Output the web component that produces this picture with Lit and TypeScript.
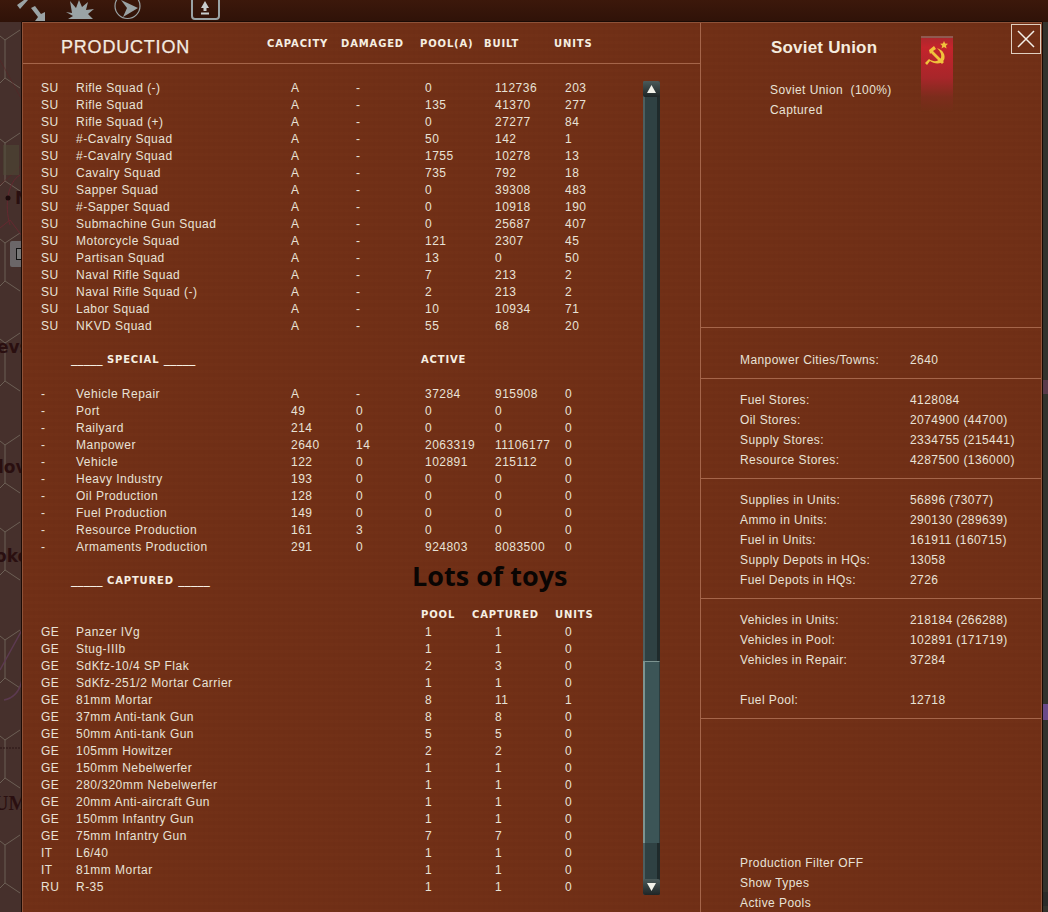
import { LitElement, html, css, svg } from "lit";
import { customElement } from "lit/decorators.js";

type Row = [string, string, string, string, string, string, string];
const r = (s: string): Row => s.split("|") as Row;

const units = [
  "SU|Rifle Squad (-)|A|-|0|112736|203",
  "SU|Rifle Squad|A|-|135|41370|277",
  "SU|Rifle Squad (+)|A|-|0|27277|84",
  "SU|#-Cavalry Squad|A|-|50|142|1",
  "SU|#-Cavalry Squad|A|-|1755|10278|13",
  "SU|Cavalry Squad|A|-|735|792|18",
  "SU|Sapper Squad|A|-|0|39308|483",
  "SU|#-Sapper Squad|A|-|0|10918|190",
  "SU|Submachine Gun Squad|A|-|0|25687|407",
  "SU|Motorcycle Squad|A|-|121|2307|45",
  "SU|Partisan Squad|A|-|13|0|50",
  "SU|Naval Rifle Squad|A|-|7|213|2",
  "SU|Naval Rifle Squad (-)|A|-|2|213|2",
  "SU|Labor Squad|A|-|10|10934|71",
  "SU|NKVD Squad|A|-|55|68|20",
].map(r);
const special = [
  "-|Vehicle Repair|A|-|37284|915908|0",
  "-|Port|49|0|0|0|0",
  "-|Railyard|214|0|0|0|0",
  "-|Manpower|2640|14|2063319|11106177|0",
  "-|Vehicle|122|0|102891|215112|0",
  "-|Heavy Industry|193|0|0|0|0",
  "-|Oil Production|128|0|0|0|0",
  "-|Fuel Production|149|0|0|0|0",
  "-|Resource Production|161|3|0|0|0",
  "-|Armaments Production|291|0|924803|8083500|0",
].map(r);
const captured = [
  "GE|Panzer IVg|||1|1|0",
  "GE|Stug-IIIb|||1|1|0",
  "GE|SdKfz-10/4 SP Flak|||2|3|0",
  "GE|SdKfz-251/2 Mortar Carrier|||1|1|0",
  "GE|81mm Mortar|||8|11|1",
  "GE|37mm Anti-tank Gun|||8|8|0",
  "GE|50mm Anti-tank Gun|||5|5|0",
  "GE|105mm Howitzer|||2|2|0",
  "GE|150mm Nebelwerfer|||1|1|0",
  "GE|280/320mm Nebelwerfer|||1|1|0",
  "GE|20mm Anti-aircraft Gun|||1|1|0",
  "GE|150mm Infantry Gun|||1|1|0",
  "GE|75mm Infantry Gun|||7|7|0",
  "IT|L6/40|||1|1|0",
  "IT|81mm Mortar|||1|1|0",
  "RU|R-35|||1|1|0",
].map(r);

type Kv = [string, string];
const groups: { cls: string; rows: Kv[] }[] = [
  { cls: "g1", rows: [["Manpower Cities/Towns:", "2640"]] },
  {
    cls: "g2",
    rows: [
      ["Fuel Stores:", "4128084"],
      ["Oil Stores:", "2074900 (44700)"],
      ["Supply Stores:", "2334755 (215441)"],
      ["Resource Stores:", "4287500 (136000)"],
    ],
  },
  {
    cls: "g3",
    rows: [
      ["Supplies in Units:", "56896 (73077)"],
      ["Ammo in Units:", "290130 (289639)"],
      ["Fuel in Units:", "161911 (160715)"],
      ["Supply Depots in HQs:", "13058"],
      ["Fuel Depots in HQs:", "2726"],
    ],
  },
  {
    cls: "g3",
    rows: [
      ["Vehicles in Units:", "218184 (266288)"],
      ["Vehicles in Pool:", "102891 (171719)"],
      ["Vehicles in Repair:", "37284"],
      ["", ""],
      ["Fuel Pool:", "12718"],
    ],
  },
];

const hexYs = [40, 143, 243, 343, 445, 532, 640, 740, 845];

@customElement("app-root")
export class AppRoot extends LitElement {
  static styles = css`
    :host {
      display: block;
      position: relative;
      width: 1048px;
      height: 912px;
      overflow: hidden;
      background: #46302c;
      font-family: "Liberation Sans", Arial, sans-serif;
      color: #e8e2d6;
    }
    .map { position: absolute; left: 0; top: 0; }
    .lbl {
      position: absolute;
      font: bold 17px "DejaVu Sans", sans-serif;
      color: #2a0f10;
    }
    .lbl.serif { font: bold 20px "Liberation Serif", serif; }
    .chip {
      position: absolute;
      left: 10px;
      top: 241px;
      width: 12px;
      height: 26px;
      background: #6b6668;
      box-sizing: border-box;
      border-radius: 2px 0 0 2px;
    }
    .chip i {
      position: absolute;
      left: 6px;
      top: 7px;
      width: 6px;
      height: 12px;
      border: 1px solid #111;
      background: #777;
      box-sizing: border-box;
    }
    .rstrip {
      position: absolute;
      right: 0;
      top: 22px;
      bottom: 0;
      width: 6px;
      background: #33322c;
    }
    .tag { position: absolute; left: 0; width: 6px; }
    .top {
      position: relative;
      height: 22px;
      background: linear-gradient(#3c180b, #2f1208);
    }
    .top svg { position: absolute; left: 0; top: 0; }
    .panel {
      position: relative;
      display: flex;
      margin: 0 6px 0 22px;
      height: 890px;
      box-sizing: border-box;
      background-color: #702f16;
      background-image:
        repeating-linear-gradient(90deg, rgba(0,0,0,.012) 0 2px, transparent 2px 5px),
        repeating-linear-gradient(0deg, rgba(255,160,100,.012) 0 3px, transparent 3px 7px);
      box-shadow: -1px 0 0 #1a0a05, 0 -1px 0 #1a0a05, 1px 0 0 #1a0a05;
      border-top: 1px solid #8e5238;
      border-left: 1px solid #8e5238;
      border-right: 1px solid #8e5238;
      overflow: hidden;
    }
    .left {
      position: relative;
      width: 677px;
      flex: none;
      border-right: 1px solid #a5654a;
    }
    .head {
      display: grid;
      grid-template-columns: 206px 74px 79px 64px 70px auto;
      align-items: center;
      height: 41px;
      padding-left: 38px;
      border-bottom: 1px solid #a5654a;
      box-sizing: border-box;
    }
    .head h1 {
      margin: 0;
      font: 500 18px "Liberation Sans", sans-serif;
      letter-spacing: 0.8px;
      -webkit-text-stroke: 0.25px #f3ebe0;
      padding-top: 8px;
      color: #f3ebe0;
    }
    .hd {
      font: bold 10px/17px "DejaVu Sans", sans-serif;
      letter-spacing: 0.85px;
      color: #f6efe2;
      white-space: nowrap;
    }
    .us {
      font-family: "DejaVu Sans Mono", monospace;
      font-size: 10.500px;
      letter-spacing: 0;
    }
    .body { padding: 16px 0 0 18px; }
    .row {
      display: grid;
      grid-template-columns: 35px 215px 65px 69px 70px 70px auto;
      height: 17px;
      line-height: 17px;
      font-size: 12px;
      letter-spacing: 0.48px;
      white-space: nowrap;
    }
    .sec {
      display: grid;
      grid-template-columns: 350px auto;
      height: 17px;
      line-height: 17px;
      padding-left: 30px;
    }
    .sec.a { margin-top: 16px; margin-bottom: 18px; }
    .sec.b { margin-top: 16px; }
    .sub {
      display: grid;
      grid-template-columns: 51px 83px auto;
      height: 17px;
      line-height: 17px;
      margin: 17px 0 1px 380px;
    }
    .toys {
      position: absolute;
      left: 389px;
      top: 534px;
      margin: 0;
      font: bold 27px "Open Sans", "Liberation Sans", sans-serif;
      color: #0a0503;
      white-space: nowrap;
    }
    .bar {
      position: absolute;
      left: 620px;
      top: 58px;
      width: 17px;
      height: 814px;
      background: linear-gradient(90deg, #4d5f60 0 2px, #2f4143 2px 14px, #1f2a2b 14px);
      border-radius: 2px;
    }
    .btn {
      position: absolute;
      left: 0;
      width: 17px;
      height: 16px;
      background: linear-gradient(#4a5a5a, #1e2526);
      display: flex;
      align-items: center;
      justify-content: center;
      border-radius: 2px;
    }
    .btn.up { top: 0; }
    .btn.down { bottom: 0; }
    .thumb {
      position: absolute;
      left: 0;
      top: 580px;
      width: 17px;
      height: 182px;
      box-sizing: border-box;
      background: #3c5557;
      border-left: 2px solid #7d9491;
      border-top: 1px solid #7d9491;
      border-right: 1px solid #2c3c3d;
    }
    .right {
      flex: 1;
      display: flex;
      flex-direction: column;
      position: relative;
      font-size: 12px;
      letter-spacing: 0.42px;
    }
    .nation {
      flex: none;
      height: 305px;
      padding: 0 0 0 69px;
      position: relative;
      box-sizing: border-box;
      border-bottom: 1px solid #a5654a;
    }
    .nation h2 {
      margin: 0 0 0 1px;
      padding-top: 14px;
      font: bold 17px/21px "Liberation Sans", sans-serif;
      letter-spacing: 0.2px;
      color: #f5ecdf;
    }
    .nation p { margin: 0; line-height: 20px; }
    .nation .lines { margin-top: 22px; }
    .flag {
      position: absolute;
      left: 220px;
      top: 13px;
      width: 32px;
      height: 76px;
    }
    .close {
      position: absolute;
      right: 0;
      top: 1px;
      width: 30px;
      height: 30px;
      padding: 0;
      box-sizing: border-box;
      border: 1px solid #e0cfc0;
      background: transparent;
      display: flex;
      align-items: center;
      justify-content: center;
    }
    .grp {
      flex: none;
      box-sizing: border-box;
      border-bottom: 1px solid #a5654a;
      padding: 22px 0 0 39px;
    }
    .grp.g1 { height: 51px; }
    .grp.g2 { height: 100px; padding-top: 11px; }
    .grp.g3 { height: 120px; padding-top: 11px; }
    .kv {
      display: grid;
      grid-template-columns: 170px auto;
      height: 20px;
      line-height: 20px;
      white-space: nowrap;
    }
    .filters { flex: none; padding: 134px 0 0 39px; }
    .filters div { height: 20px; line-height: 20px; }
  `;

  private rows(list: Row[]) {
    return list.map(
      (x) => html`<div class="row">${x.map((c) => html`<span>${c}</span>`)}</div>`
    );
  }

  private map() {
    return svg`<svg class="map" width="22" height="912" viewBox="0 0 22 912" fill="none">
      ${hexYs.map(
        (y) => svg`<path d="M5 ${y}V${y + 38}M5 ${y}L0 ${y - 4}M5 ${y}L20 ${y - 10}M5 ${y + 38}L0 ${y + 43}M5 ${y + 38}L20 ${y + 48}" stroke="#7c7366" stroke-width="1" opacity=".7"/>`
      )}
      <path d="M0 60L22 100M0 185L22 165" stroke="#5a2426" opacity=".6"/>
      <path d="M20 175C8 182 4 205 10 225M0 228L10 220L22 236" stroke="#652830"/>
      <circle cx="8" cy="198" r="2.5" fill="#1c0a0b"/>
      <rect x="3" y="145" width="16" height="30" fill="#4e4a36" opacity=".55"/>
      <path d="M0 670L22 630M4 700C14 698 20 690 22 680" stroke="#5c3a50" stroke-width="1.5"/>
      <path d="M0 748H22" stroke="#2a1414" stroke-dasharray="2 1"/>
    </svg>`;
  }

  private topIcons() {
    return svg`<svg width="240" height="22" viewBox="0 0 240 22">
      <g fill="#9aa3a5">
        <path d="M17 5L24 0H28L20 9ZM31 8L35 6L41 14L45 12V21H35L38 17Z"/>
        <path d="M66 12L72 13L70 1L76 8L79 0L82 7L88 2L86 10L94 9L88 14L93 19H68L73 16Z"/>
        <path d="M121 0L138 8L123 17L127 8Z"/>
        <path d="M201 8L205 1L209 8H206.500V11H203.500V8ZM201 12.500H209V14.500H201Z" fill="#c8cdcd"/>
      </g>
      <circle cx="127.500" cy="6" r="12.500" fill="none" stroke="#9aa3a5" stroke-width="1.2"/>
      <path d="M192 -2V16Q192 19 195 19H216Q219 19 219 16V-2" fill="none" stroke="#9aa3a5" stroke-width="2"/>
    </svg>`;
  }

  render() {
    return html`
      ${this.map()}
      <span class="lbl" style="left:15px;top:188px">N</span>
      <div class="chip"><i></i></div>
      <span class="lbl" style="left:-3px;top:337px">evs</span>
      <span class="lbl" style="left:-2px;top:457px">lov</span>
      <span class="lbl" style="left:-5px;top:546px">oko</span>
      <span class="lbl serif" style="left:-6px;top:792px">UM</span>
      <div class="rstrip">
        <div class="tag" style="top:358px;height:14px;background:#5a3a4a"></div>
        <div class="tag" style="top:682px;height:16px;background:#6a4a8a"></div>
        <div class="tag" style="top:870px;height:14px;background:#2a2a28"></div>
      </div>
      <div class="top">${this.topIcons()}</div>
      <main class="panel">
        <section class="left">
          <header class="head">
            <h1>PRODUCTION</h1>
            <span class="hd">CAPACITY</span>
            <span class="hd">DAMAGED</span>
            <span class="hd">POOL(A)</span>
            <span class="hd">BUILT</span>
            <span class="hd">UNITS</span>
          </header>
          <div class="body">
            ${this.rows(units)}
            <div class="sec a">
              <span class="hd"><span class="us">_____</span> SPECIAL <span class="us">_____</span></span>
              <span class="hd">ACTIVE</span>
            </div>
            ${this.rows(special)}
            <div class="sec b">
              <span class="hd"><span class="us">_____</span> CAPTURED <span class="us">_____</span></span>
            </div>
            <div class="sub">
              <span class="hd">POOL</span>
              <span class="hd">CAPTURED</span>
              <span class="hd">UNITS</span>
            </div>
            ${this.rows(captured)}
          </div>
          <h3 class="toys">Lots of toys</h3>
          <div class="bar">
            <div class="thumb"></div>
            <div class="btn up">
              <svg width="9" height="8" viewBox="0 0 9 8"><path d="M4.500 0L9 8H0Z" fill="#f2f2ea"/></svg>
            </div>
            <div class="btn down">
              <svg width="9" height="8" viewBox="0 0 9 8"><path d="M0 0H9L4.500 8Z" fill="#f2f2ea"/></svg>
            </div>
          </div>
        </section>
        <aside class="right">
          <div class="nation">
            <h2>Soviet Union</h2>
            <div class="lines">
              <p>Soviet Union&nbsp; (100%)</p>
              <p>Captured</p>
            </div>
            <svg class="flag" viewBox="0 0 32 76">
              <defs>
                <linearGradient id="fl" x1="0" y1="0" x2="0" y2="1">
                  <stop offset="0" stop-color="#a8282c"/>
                  <stop offset=".15" stop-color="#c4242c"/>
                  <stop offset=".55" stop-color="#a8262a"/>
                  <stop offset=".8" stop-color="#7c2c1c"/>
                  <stop offset="1" stop-color="#702f16"/>
                </linearGradient>
              </defs>
              <rect width="32" height="76" fill="url(#fl)"/>
              <rect width="32" height="2" fill="#8f5a50"/>
              <path d="M23 5l1.200 2.600 2.800.2-2.100 1.900.7 2.800-2.600-1.500-2.500 1.500.7-2.800-2.100-1.900 2.800-.2Z" fill="#f0c23c"/>
              <path d="M16 12C22 14 25 19 23 24C20 29 13 28 9 25L6 29L4 27L8 23C12 26 17 26 20 22C21 18 19 15 16 12Z" fill="#f0c23c"/>
              <path d="M8 14L13 10L15 13L12 15L23 26L21 28L10 17L9 18Z" fill="#f0c23c"/>
            </svg>
          </div>
          ${groups.map(
            (g) => html`<div class="grp ${g.cls}">
              ${g.rows.map(
                (k) => html`<div class="kv"><span>${k[0]}</span><span>${k[1]}</span></div>`
              )}
            </div>`
          )}
          <div class="filters">
            <div>Production Filter OFF</div>
            <div>Show Types</div>
            <div>Active Pools</div>
          </div>
          <button class="close" aria-label="Close">
            <svg width="18" height="18" viewBox="0 0 18 18"><path d="M1 1L17 17M17 1L1 17" stroke="#f3efe8" stroke-width="1.500"/></svg>
          </button>
        </aside>
      </main>
    `;
  }
}
